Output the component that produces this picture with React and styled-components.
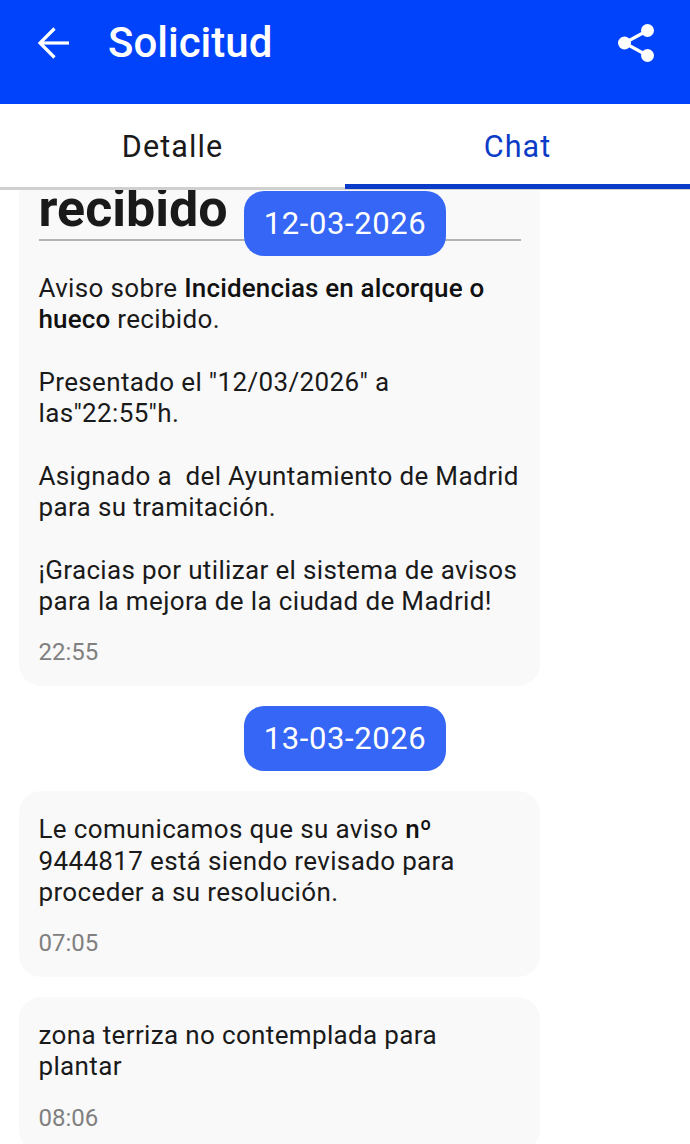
import React from 'react';
import styled, { createGlobalStyle } from 'styled-components';

const GlobalStyle = createGlobalStyle`
	html, body {
		margin: 0;
		padding: 0;
		background: #fff;
		font-family: Roboto, "Noto Sans", sans-serif;
	}
`;

export default function App() {
	return (
		<Screen>
			<GlobalStyle />
			<Header>
				<IconButton aria-label="Volver">
					<svg width="34" height="34" viewBox="0 0 34 34" fill="none" stroke="#fff" strokeWidth="3.2">
						<path d="M32 17H3" />
						<path d="M17.5 2.5L3 17l14.5 14.5" />
					</svg>
				</IconButton>
				<Title>Solicitud</Title>
				<ShareButton aria-label="Compartir">
					<svg width="38" height="40" viewBox="0 0 38 40" fill="#fff">
						<circle cx="30.5" cy="7.5" r="6.5" />
						<circle cx="7.5" cy="20" r="6.5" />
						<circle cx="30.5" cy="32.5" r="6.5" />
						<path d="M30.5 7.5L7.5 20l23 12.5" fill="none" stroke="#fff" strokeWidth="3.2" />
					</svg>
				</ShareButton>
			</Header>

			<Tabs>
				<Tab>Detalle</Tab>
				<Tab $active>Chat</Tab>
			</Tabs>

			<ChatArea>
				<StickyDate>12-03-2026</StickyDate>
				<Messages>
					<Bubble>
						<BubbleTitle>recibido</BubbleTitle>
						<BubbleText>
							Aviso sobre <b>Incidencias en alcorque o hueco</b> recibido.
							<br /><br />
							Presentado el "12/03/2026" a las"22:55"h.
							<br /><br />
							Asignado a &nbsp;del Ayuntamiento de Madrid para su tramitación.
							<br /><br />
							¡Gracias por utilizar el sistema de avisos para la mejora de la ciudad de Madrid!
						</BubbleText>
						<Time>22:55</Time>
					</Bubble>

					<DateRow><DatePill>13-03-2026</DatePill></DateRow>

					<Bubble>
						<BubbleText>
							Le comunicamos que su aviso <b>nº</b> 9444817 está siendo revisado para proceder a su resolución.
						</BubbleText>
						<Time>07:05</Time>
					</Bubble>

					<Bubble>
						<BubbleText>zona terriza no contemplada para plantar</BubbleText>
						<Time>08:06</Time>
					</Bubble>
				</Messages>
			</ChatArea>
		</Screen>
	);
}

const Screen = styled.div`
	width: 690px;
	height: 1144px;
	overflow: hidden;
	display: flex;
	flex-direction: column;
	background: #fff;
`;

const Header = styled.header`
	height: 104px;
	flex: none;
	background: #0043fa;
	display: flex;
	align-items: flex-start;
	padding: 0 35px 0 37px;
	box-sizing: border-box;
`;

const IconButton = styled.div`
	margin-top: 26px;
	width: 34px;
	height: 34px;
	display: flex;
`;

const ShareButton = styled.div`
	margin-top: 23px;
	margin-left: auto;
	display: flex;
`;

const Title = styled.h1`
	margin: 18px 0 0 37px;
	color: #fff;
	font-size: 42px;
	line-height: 50px;
	font-weight: 500;
`;

const Tabs = styled.nav`
	height: 85px;
	flex: none;
	display: flex;
	background: #fff;
	box-shadow: inset 0 -3px 0 #d0d0d0;
	margin-top: 1px;
`;

const Tab = styled.div`
	flex: 1;
	display: flex;
	align-items: center;
	justify-content: center;
	padding-top: 4px;
	box-sizing: border-box;
	font-size: 30.5px;
	letter-spacing: 1.1px;
	color: ${(p) => (p.$active ? '#0a3cc8' : '#1a1a1a')};
	border-bottom: 5px solid ${(p) => (p.$active ? '#0a3cc8' : 'transparent')};
	margin-bottom: 1px;
`;

const ChatArea = styled.main`
	position: relative;
	flex: 1;
	overflow: hidden;
`;

const Messages = styled.div`
	display: flex;
	flex-direction: column;
	align-items: flex-start;
	gap: 20px;
	padding-left: 19px;
	margin-top: -29px;
`;

const StickyDate = styled.div`
	position: absolute;
	z-index: 1;
	top: 1px;
	left: 244px;
	width: 202px;
	height: 65px;
	display: flex;
	align-items: center;
	justify-content: center;
	border-radius: 20px;
	background: #3566f5;
	color: #fff;
	font-size: 31px;
	letter-spacing: 0.6px;
`;

const DateRow = styled.div`
	width: 652px;
	display: flex;
	justify-content: center;
`;

const DatePill = styled(StickyDate)`
	position: static;
`;

const Bubble = styled.article`
	width: 521px;
	box-sizing: border-box;
	padding: 23px 19px 19px 19.5px;
	background: #f9f9f9;
	border-radius: 22px;
`;

const BubbleTitle = styled.h2`
	margin: 0 0 32px;
	padding-bottom: 5px;
	border-bottom: 2px solid #b4b4b4;
	color: #1a1a1a;
	font-size: 52px;
	line-height: 50px;
	font-weight: 700;
`;

const BubbleText = styled.p`
	margin: 0;
	color: #1a1a1a;
	font-size: 26px;
	line-height: 31.3px;
	letter-spacing: 0.35px;

	b {
		font-weight: 500;
		color: #111;
		letter-spacing: 0.15px;
	}
`;

const Time = styled.div`
	margin-top: 20px;
	color: #808080;
	font-size: 24px;
	line-height: 30px;
`;
